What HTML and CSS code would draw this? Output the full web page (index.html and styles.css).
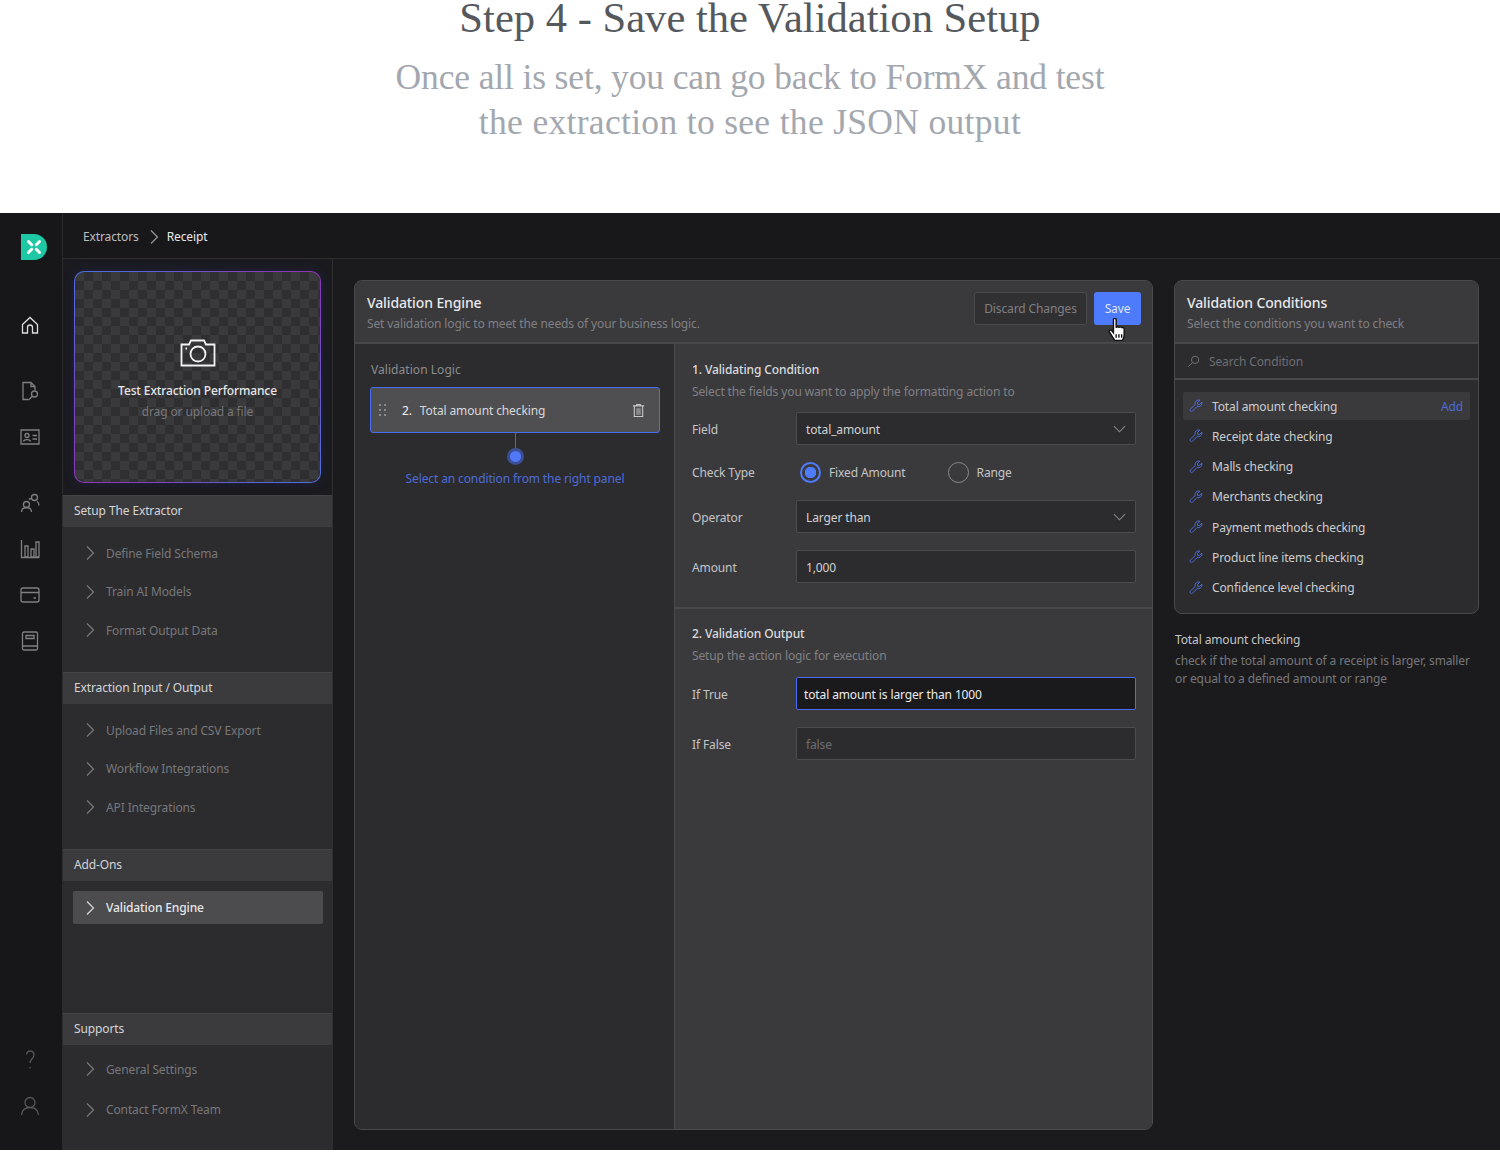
FILE: index.html
```html
<!DOCTYPE html>
<html lang="en">
<head>
  <meta charset="UTF-8" />
  <title>Step 4 - Save the Validation Setup</title>
  <link rel="stylesheet" href="styles.css">
</head>
<body>
  <header class="intro">
    <h1>Step 4 - Save the Validation Setup</h1>
    <p><span class="line-one">Once all is set, you can go back to FormX and test</span><span class="line-two">the extraction to see the JSON output</span></p>
  </header>

  <div class="app">
    <nav class="rail">
      <svg class="logo" viewBox="0 0 26 26">
        <path d="M0 0H13A13 13 0 0 1 13 26H0Z" fill="#1fc8a5"/>
        <g stroke="#fff" stroke-width="3" stroke-linecap="round">
          <path d="M7.500 7.500l3.200 3.200M18.500 7.500l-3.200 3.200M7.500 18.500l3.200-3.200M18.500 18.500l-3.200-3.200"/>
        </g>
      </svg>
      <div class="rail-group first">
        <svg class="rail-icon bright" viewBox="0 0 24 24"><path d="M4.500 11.500L12 4.500l7.500 7v8.500h-5v-5.500a2.500 2.500 0 0 0-5 0V20h-5z"/></svg>
      </div>
      <div class="rail-group">
        <svg class="rail-icon" viewBox="0 0 24 24"><path d="M10 20.500H5V3.500h8l4 4v3.500M13 3.500v4h4"/><circle cx="16.500" cy="15" r="3"/><path d="M14.300 17.200L10.500 21"/></svg>
        <svg class="rail-icon" viewBox="0 0 24 24"><path d="M3 5h18v14H3z"/><circle cx="9" cy="10.500" r="2"/><path d="M5.500 16.500c.5-2.500 6.500-2.500 7 0M14.500 10.500h4.500M14.500 14h4.500"/></svg>
      </div>
      <div class="rail-group">
        <svg class="rail-icon" viewBox="0 0 24 24"><circle cx="16.500" cy="6.500" r="3"/><circle cx="8.500" cy="13.500" r="3"/><path d="M3.500 21c0-6 10-6 10 0M11 8.500c.5-.7 1.500-1 2.500-1M19 10.500c1.500.7 2 2 2 4"/></svg>
        <svg class="rail-icon" viewBox="0 0 24 24"><path d="M3.500 3v17.500H21M7 9h3v11H7zM13 12h3v8h-3zM18 5h3v15h-3z"/></svg>
        <svg class="rail-icon" viewBox="0 0 24 24"><rect x="3" y="5" width="18" height="14" rx="2"/><path d="M3 9.500h18M15.500 15h2.500"/></svg>
        <svg class="rail-icon" viewBox="0 0 24 24"><rect x="4.500" y="3" width="15" height="18" rx="1.500"/><path d="M4.500 17h15M8 6.500h8v3H8z"/></svg>
      </div>
      <div class="rail-group bottom">
        <svg class="rail-icon faint" viewBox="0 0 24 24"><path d="M8.500 6.500C9 4 10.500 3 12 3c2.500 0 4 1.800 4 4 0 3.500-4 4-4 8M12 19v1.500"/></svg>
        <svg class="rail-icon faint" viewBox="0 0 24 24"><circle cx="12" cy="8.500" r="5"/><path d="M3.500 21c.5-5 4-7.500 8.500-7.500s8 2.500 8.500 7.500"/></svg>
      </div>
    </nav>

    <div class="workspace">
      <div class="topbar">
        <span>Extractors</span>
        <svg class="chevron" viewBox="0 0 10 16"><path d="M2 1.500L8.500 8 2 14.500"/></svg>
        <span class="current">Receipt</span>
      </div>

      <div class="columns">
        <aside class="sidebar">
          <div class="upload-wrap">
            <div class="upload">
              <svg class="camera" viewBox="0 0 36 28"><path d="M1.500 5.500H9l2-4h13l2 4h8.500v21h-33z"/><circle cx="18" cy="15" r="7.500"/><path d="M5.500 9.500h1.500"/></svg>
              <div class="upload-title">Test Extraction Performance</div>
              <div class="upload-sub">drag or upload a file</div>
            </div>
          </div>

          <section class="side-section setup">
            <h3>Setup The Extractor</h3>
            <ul>
              <li><svg class="chevron" viewBox="0 0 10 16"><path d="M2 1.500L8.500 8 2 14.500"/></svg>Define Field Schema</li>
              <li><svg class="chevron" viewBox="0 0 10 16"><path d="M2 1.500L8.500 8 2 14.500"/></svg>Train AI Models</li>
              <li><svg class="chevron" viewBox="0 0 10 16"><path d="M2 1.500L8.500 8 2 14.500"/></svg>Format Output Data</li>
            </ul>
          </section>

          <section class="side-section setup">
            <h3>Extraction Input / Output</h3>
            <ul>
              <li><svg class="chevron" viewBox="0 0 10 16"><path d="M2 1.500L8.500 8 2 14.500"/></svg>Upload Files and CSV Export</li>
              <li><svg class="chevron" viewBox="0 0 10 16"><path d="M2 1.500L8.500 8 2 14.500"/></svg>Workflow Integrations</li>
              <li><svg class="chevron" viewBox="0 0 10 16"><path d="M2 1.500L8.500 8 2 14.500"/></svg>API Integrations</li>
            </ul>
          </section>

          <section class="side-section addons">
            <h3>Add-Ons</h3>
            <ul>
              <li class="active"><svg class="chevron" viewBox="0 0 10 16"><path d="M2 1.500L8.500 8 2 14.500"/></svg>Validation Engine</li>
            </ul>
          </section>

          <section class="side-section supports">
            <h3>Supports</h3>
            <ul>
              <li><svg class="chevron" viewBox="0 0 10 16"><path d="M2 1.500L8.500 8 2 14.500"/></svg>General Settings</li>
              <li><svg class="chevron" viewBox="0 0 10 16"><path d="M2 1.500L8.500 8 2 14.500"/></svg>Contact FormX Team</li>
            </ul>
          </section>
        </aside>

        <main class="content">
          <section class="panel engine">
            <div class="panel-head">
              <div>
                <h2>Validation Engine</h2>
                <p>Set validation logic to meet the needs of your business logic.</p>
              </div>
              <div class="actions">
                <button class="btn-discard">Discard Changes</button>
                <button class="btn-save">Save</button>
                <svg class="cursor" viewBox="1 1 15.500 22"><path d="M5.500 2.500c0-1.600 2.500-1.600 2.500 0V10c.2-1.400 2.400-1.400 2.500 0 .2-1.200 2.300-1.200 2.500.3.300-1 2.300-.8 2.300.7v5.500c0 2.500-1 3.500-1.500 5H6.500C5.500 19 3.500 17 1.800 14c-.9-1.600 1-2.700 2-1.500l1.700 2z"/><path d="M8 16v3M10.500 16v3M13 16v3"/></svg>
              </div>
            </div>

            <div class="engine-body">
              <div class="logic">
                <h4>Validation Logic</h4>
                <div class="logic-item">
                  <span class="grip"><i></i><i></i><i></i><i></i><i></i><i></i></span>
                  <span class="logic-num">2.</span>
                  <span class="logic-name">Total amount checking</span>
                  <svg class="trash" viewBox="0 0 14 16"><path d="M1 3h12M5 3V1.500h4V3M2.500 3v11.500h9V3"/><path class="fill" d="M4.500 5.500h5v7h-5z"/></svg>
                </div>
                <div class="connector"></div>
                <div class="node"></div>
                <div class="logic-hint">Select an condition from the right panel</div>
              </div>

              <div class="form">
                <div class="form-block first">
                  <h4>1. Validating Condition</h4>
                  <p>Select the fields you want to apply the formatting action to</p>
                  <div class="form-row field-row">
                    <label>Field</label>
                    <div class="input">total_amount<svg class="caret" viewBox="0 0 14 8"><path d="M1 1l6 6 6-6"/></svg></div>
                  </div>
                  <div class="form-row radio-row">
                    <label>Check Type</label>
                    <div class="radios">
                      <span class="radio on">Fixed Amount</span>
                      <span class="radio">Range</span>
                    </div>
                  </div>
                  <div class="form-row operator-row">
                    <label>Operator</label>
                    <div class="input">Larger than<svg class="caret" viewBox="0 0 14 8"><path d="M1 1l6 6 6-6"/></svg></div>
                  </div>
                  <div class="form-row amount-row">
                    <label>Amount</label>
                    <div class="input">1,000</div>
                  </div>
                </div>
                <div class="form-block">
                  <h4>2. Validation Output</h4>
                  <p>Setup the action logic for execution</p>
                  <div class="form-row output-row">
                    <label>If True</label>
                    <div class="input focused">total amount is larger than 1000</div>
                  </div>
                  <div class="form-row amount-row">
                    <label>If False</label>
                    <div class="input placeholder">false</div>
                  </div>
                </div>
              </div>
            </div>
          </section>

          <div class="right-col">
            <section class="panel conditions">
              <div class="panel-head">
                <div>
                  <h2>Validation Conditions</h2>
                  <p>Select the conditions you want to check</p>
                </div>
              </div>
              <div class="search">
                <svg viewBox="0 0 16 16"><circle cx="10" cy="6" r="4.500"/><path d="M6.700 9.300L1.500 14.500"/></svg>
                Search Condition
              </div>
              <ul class="cond-list">
                <li class="hover"><svg class="wrench" viewBox="0 0 16 16"><path d="M12.500 1.300L9.800 4v2.200H12l2.700-2.700A4.300 4.300 0 0 1 9.200 8.600L4 14a1.800 1.800 0 0 1-2.500-2.500L7 6.500a4.300 4.300 0 0 1 5.500-5.200z"/></svg>Total amount checking<span class="add">Add</span></li>
                <li><svg class="wrench" viewBox="0 0 16 16"><path d="M12.500 1.300L9.800 4v2.200H12l2.700-2.700A4.300 4.300 0 0 1 9.200 8.600L4 14a1.800 1.800 0 0 1-2.500-2.500L7 6.500a4.300 4.300 0 0 1 5.500-5.200z"/></svg>Receipt date checking</li>
                <li><svg class="wrench" viewBox="0 0 16 16"><path d="M12.500 1.300L9.800 4v2.200H12l2.700-2.700A4.300 4.300 0 0 1 9.200 8.600L4 14a1.800 1.800 0 0 1-2.500-2.500L7 6.500a4.300 4.300 0 0 1 5.500-5.200z"/></svg>Malls checking</li>
                <li><svg class="wrench" viewBox="0 0 16 16"><path d="M12.500 1.300L9.800 4v2.200H12l2.700-2.700A4.300 4.300 0 0 1 9.200 8.600L4 14a1.800 1.800 0 0 1-2.500-2.500L7 6.500a4.300 4.300 0 0 1 5.500-5.200z"/></svg>Merchants checking</li>
                <li><svg class="wrench" viewBox="0 0 16 16"><path d="M12.500 1.300L9.800 4v2.200H12l2.700-2.700A4.300 4.300 0 0 1 9.200 8.600L4 14a1.800 1.800 0 0 1-2.500-2.500L7 6.500a4.300 4.300 0 0 1 5.500-5.200z"/></svg>Payment methods checking</li>
                <li><svg class="wrench" viewBox="0 0 16 16"><path d="M12.500 1.300L9.800 4v2.200H12l2.700-2.700A4.300 4.300 0 0 1 9.200 8.600L4 14a1.800 1.800 0 0 1-2.500-2.500L7 6.500a4.300 4.300 0 0 1 5.500-5.200z"/></svg>Product line items checking</li>
                <li><svg class="wrench" viewBox="0 0 16 16"><path d="M12.500 1.300L9.800 4v2.200H12l2.700-2.700A4.300 4.300 0 0 1 9.200 8.600L4 14a1.800 1.800 0 0 1-2.500-2.500L7 6.500a4.300 4.300 0 0 1 5.500-5.200z"/></svg>Confidence level checking</li>
              </ul>
            </section>
            <div class="cond-info">
              <h5>Total amount checking</h5>
              <p>check if the total amount of a receipt is larger, smaller or equal to a defined amount or range</p>
            </div>
          </div>
        </main>
      </div>
    </div>
  </div>
</body>
</html>
```

FILE: styles.css
```css
* {
  box-sizing: border-box;
}

html, body {
  margin: 0;
  height: 1152px;
  overflow: hidden;
}

body {
  background: #fff;
  font-family: "Noto Sans", Arial, sans-serif;
  font-size: 12px;
  letter-spacing: -0.12px;
  color: #d6d6d8;
}

ul {
  list-style: none;
  margin: 0;
  padding: 0;
}

h1, h2, h3, h4, h5, p {
  margin: 0;
  font-weight: 400;
  font-size: inherit;
}

.intro {
  height: 213px;
  text-align: center;
  font-family: "Liberation Serif", serif;
  letter-spacing: 0;
}

.intro h1 {
  font-size: 42.600px;
  line-height: 36px;
  color: #55585d;
}

.intro p {
  margin-top: 19px;
  font-size: 35.500px;
  line-height: 45px;
  color: #a3a7ae;
}

.line-one,
.line-two {
  display: block;
}

.line-one {
  letter-spacing: -0.14px;
}

.line-two {
  letter-spacing: 0.32px;
}

.app {
  height: 937px;
  display: flex;
  background: #1b1b1d;
}

.rail {
  width: 63px;
  flex: none;
  display: flex;
  flex-direction: column;
  align-items: center;
  padding: 21px 0 32px;
  background: #17171a;
  border-right: 1px solid #2b2b2e;
}

.logo {
  width: 26px;
  height: 26px;
  margin-left: 5px;
}

.rail-group {
  display: flex;
  flex-direction: column;
  gap: 22px;
  margin-top: 42px;
  margin-left: -3px;
}

.rail-group.first {
  margin-top: 53px;
}

.rail-group.bottom {
  margin-top: auto;
}

.rail-icon {
  width: 24px;
  height: 24px;
  fill: none;
  stroke: #808083;
  stroke-width: 1.300;
}

.rail-icon.bright {
  stroke: #dedee0;
}

.rail-icon.faint {
  stroke: #55555a;
}

.workspace {
  flex: 1;
  display: flex;
  flex-direction: column;
  min-width: 0;
}

.topbar {
  height: 46px;
  flex: none;
  display: flex;
  align-items: center;
  padding: 2px 0 0 20px;
  background: #18181b;
  border-bottom: 1px solid #2e2e31;
  color: #bdbdc0;
}

.topbar .chevron {
  margin: 0 8px 0 10px;
}

.topbar .current {
  color: #e8e8ea;
}

.chevron {
  width: 10px;
  height: 16px;
  flex: none;
  fill: none;
  stroke: #98989b;
  stroke-width: 1.200;
}

.columns {
  flex: 1;
  display: flex;
  min-height: 0;
}

.sidebar {
  width: 270px;
  flex: none;
  display: flex;
  flex-direction: column;
  background: #1a1a1f;
  border-right: 1px solid #2f2f32;
}

.upload-wrap {
  height: 236px;
  padding: 12px 11px 12px 11px;
}

.upload {
  height: 100%;
  display: flex;
  flex-direction: column;
  align-items: center;
  padding-top: 67px;
  border: 1.500px solid transparent;
  border-radius: 10px;
  background:
    repeating-conic-gradient(#2f2f31 0 25%, #3a3a3c 0 50%) 0 0 / 18px 18px padding-box,
    conic-gradient(from 45deg, #8d35b8, #4e6ee0, #8d35b8, #4e6ee0, #8d35b8) border-box;
  box-shadow: 0 0 12px rgba(60, 60, 160, 0.22);
}

.camera {
  width: 36px;
  height: 28px;
  fill: none;
  stroke: #f2f2f2;
  stroke-width: 1.800;
}

.upload-title {
  margin-top: 15px;
  font-weight: 500;
  color: #e6e6e8;
  line-height: 18px;
}

.upload-sub {
  margin-top: 3px;
  color: #77777b;
  line-height: 18px;
}

.side-section {
  background: #2c2c2e;
  border-top: 1px solid #444447;
}

.side-section h3 {
  height: 31px;
  padding-left: 11px;
  line-height: 30px;
  color: #d4d4d6;
  background: #3b3b3e;
}

.side-section.setup {
  height: 177px;
}

.side-section.addons {
  height: 164px;
}

.side-section.supports {
  flex: 1;
}

.side-section ul {
  display: flex;
  flex-direction: column;
  gap: 16px;
  padding: 15px 9px 0 10px;
}

.side-section li {
  display: flex;
  align-items: center;
  gap: 11px;
  height: 22.500px;
  padding-left: 12px;
  color: #77777b;
}

.side-section li .chevron {
  stroke: #7a7a7d;
}

.side-section.addons ul {
  padding-top: 10px;
}

.side-section li.active {
  height: 33px;
  font-weight: 500;
  color: #e6e6e8;
  background: #4c4c4f;
  border-radius: 2px;
}

.side-section li.active .chevron {
  stroke: #d8d8da;
}

.side-section.supports ul {
  gap: 18px;
  padding-top: 13px;
}

.content {
  flex: 1;
  display: flex;
  gap: 21px;
  padding: 21px 21px 20px;
  min-width: 0;
}

.panel {
  border: 1px solid #4a4a4d;
  border-radius: 8px;
  overflow: hidden;
  background: #2c2c2e;
}

.engine {
  width: 799px;
  flex: none;
  display: flex;
  flex-direction: column;
}

.panel-head {
  height: 63px;
  flex: none;
  display: flex;
  justify-content: space-between;
  align-items: flex-start;
  padding: 11px 11px 0 12px;
  background: #3a3a3d;
  border-bottom: 2px solid #48484b;
}

.panel-head h2 {
  font-size: 14px;
  line-height: 21px;
  font-weight: 500;
  color: #e8e8ea;
}

.panel-head p {
  line-height: 18px;
  margin-top: 2px;
  color: #808084;
}

.actions {
  position: relative;
  display: flex;
  gap: 7px;
}

.actions button {
  height: 33px;
  font: inherit;
  letter-spacing: inherit;
  border-radius: 3px;
}

.btn-discard {
  width: 113px;
  background: #303032;
  border: 1px solid #4a4a4d;
  color: #7f7f83;
}

.btn-save {
  width: 47px;
  background: #4d7bfb;
  border: none;
  color: #dfe6fb;
}

.cursor {
  position: absolute;
  right: 15px;
  top: 26px;
  width: 18px;
  height: 24px;
  fill: #fff;
  stroke: #111;
  stroke-width: 1.300;
}

.engine-body {
  flex: 1;
  display: flex;
  min-height: 0;
}

.logic {
  width: 320px;
  flex: none;
  display: flex;
  flex-direction: column;
  align-items: center;
  padding: 15px 14px 15px 15px;
  background: #2c2c2e;
  border-right: 1px solid #4a4a4d;
}

.logic h4 {
  align-self: stretch;
  padding-left: 1px;
  line-height: 22px;
  letter-spacing: 0.05px;
  color: #8b8b8e;
}

.logic-item {
  align-self: stretch;
  height: 46px;
  margin-top: 6px;
  display: flex;
  align-items: center;
  padding: 0 14px 0 8px;
  background: #4f4f52;
  border: 1px solid #4a6cf0;
  border-radius: 3px;
  color: #d8d8da;
}

.grip {
  width: 7px;
  display: grid;
  grid-template-columns: 2px 2px;
  gap: 3px;
  justify-content: space-between;
}

.grip i {
  width: 2px;
  height: 2px;
  background: #8a8a8d;
}

.logic-num {
  margin-left: 16px;
  color: #eee;
}

.logic-name {
  margin-left: 8px;
  flex: 1;
}

.trash {
  width: 13px;
  height: 15px;
  fill: none;
  stroke: #c8c8ca;
  stroke-width: 1.200;
}

.trash .fill {
  fill: #8a8a8d;
  stroke: none;
}

.connector {
  width: 1px;
  height: 15px;
  background: #6a6a6d;
}

.node {
  width: 17px;
  height: 17px;
  border-radius: 50%;
  background: #5079f8;
  border: 3px solid #3c4e94;
}

.logic-hint {
  margin-top: 5px;
  line-height: 18px;
  color: #4d6bd8;
}

.form {
  flex: 1;
  background: #3a3a3d;
}

.form-block {
  padding: 14px 16px 0 17px;
}

.form-block.first {
  height: 265px;
  padding-top: 15px;
  border-bottom: 2px solid #48484b;
}

.form-block h4 {
  line-height: 22px;
  font-weight: 500;
  color: #dcdcde;
}

.form-block p {
  line-height: 22px;
  color: #808084;
}

.form-row {
  display: flex;
  align-items: center;
}

.form-row label {
  width: 104px;
  flex: none;
  padding-top: 1px;
  color: #c4c4c6;
}

.radio-row label {
  padding-top: 0;
}

.field-row {
  margin-top: 9px;
}

.output-row {
  margin-top: 10px;
}

.radio-row {
  margin-top: 10px;
  height: 34px;
}

.operator-row {
  margin-top: 11px;
}

.amount-row {
  margin-top: 17px;
}

.input {
  flex: 1;
  height: 33px;
  display: flex;
  align-items: center;
  justify-content: space-between;
  padding: 1px 9px 0;
  background: #2c2c2e;
  border: 1px solid #4c4c4f;
  border-radius: 2px;
  color: #d2d2d4;
}

.input.focused {
  padding: 1px 7px 0;
  background: #1a1a1d;
  border-color: #4a6cf0;
  color: #ececee;
}

.input.placeholder {
  color: #6e6e72;
}

.caret {
  width: 13px;
  height: 8px;
  fill: none;
  stroke: #8a8a8d;
  stroke-width: 1.100;
}

.radios {
  display: flex;
  gap: 42px;
  padding-left: 4px;
  margin-top: 1px;
}

.radio {
  display: flex;
  align-items: center;
  gap: 8px;
  color: #c4c4c6;
}

.radio::before {
  content: "";
  box-sizing: border-box;
  width: 21px;
  height: 21px;
  border-radius: 50%;
  border: 1px solid #8a8a8d;
}

.radio.on::before {
  border: 2px solid #4d7bfb;
  background: radial-gradient(circle, #4d7bfb 0 5.500px, transparent 6px);
}

.right-col {
  width: 305px;
  flex: none;
}

.conditions {
  height: 334px;
}

.search {
  height: 36px;
  display: flex;
  align-items: center;
  gap: 9px;
  padding-left: 12px;
  background: #2c2c2e;
  border-bottom: 2px solid #48484b;
  color: #6e6e72;
}

.search svg {
  width: 13px;
  height: 13px;
  fill: none;
  stroke: #77777b;
  stroke-width: 1.100;
}

.cond-list {
  padding: 12px 8px 0;
}

.cond-list li {
  height: 28px;
  margin-bottom: 2.300px;
  display: flex;
  align-items: center;
  padding: 0 7px 0 6px;
  gap: 9px;
  color: #cdcdcf;
  border-radius: 2px;
}

.cond-list li.hover {
  background: #3a3a3d;
}

.wrench {
  width: 14px;
  height: 14px;
  flex: none;
  fill: none;
  stroke: #4d6bd8;
  stroke-width: 1.100;
}

.add {
  margin-left: auto;
  color: #4d6bd8;
}

.cond-info {
  padding: 16px 0 0 1px;
}

.cond-info h5 {
  line-height: 20px;
  color: #c4c4c6;
}

.cond-info p {
  margin-top: 2px;
  line-height: 18px;
  color: #77777b;
}
```
